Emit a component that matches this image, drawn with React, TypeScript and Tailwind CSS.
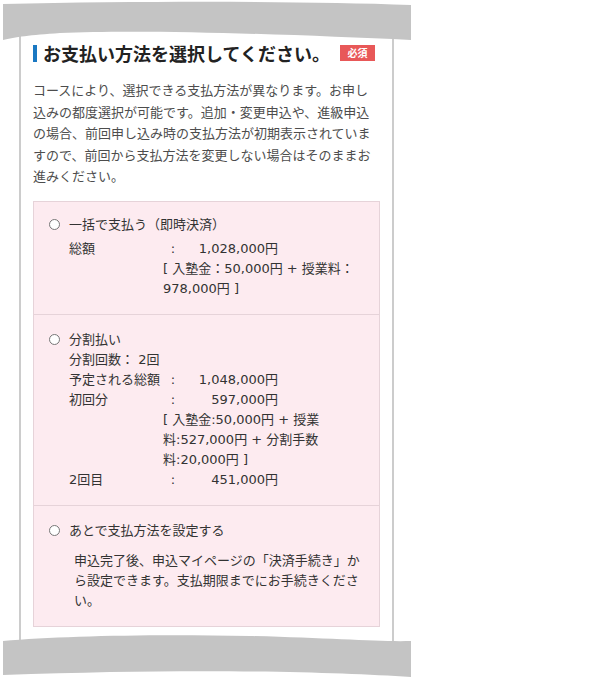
import React from "react";

const font = { fontFamily: '"Noto Sans CJK JP", "Noto Sans", sans-serif' };
// Meiryo-like wide latin digits for the amounts box
const boxFont = { fontFamily: '"DejaVu Sans", "Noto Sans CJK JP", sans-serif' };

type Row = { label: string; value?: string; note?: string };

function Radio() {
  return <span className="inline-block w-[11px] h-[11px] rounded-full border border-[#777] bg-white shrink-0" />;
}

function AmountRow({ label, value, note }: Row) {
  return (
    <div className="grid grid-cols-[94px_1fr]">
      <div>{label}</div>
      <div>
        {value && (
          <div className="flex">
            <span className="w-[20px] text-center">:</span>
            <span className="w-[95px] text-right">{value}</span>
          </div>
        )}
        {note && <div>{note}</div>}
      </div>
    </div>
  );
}

function Option({ title, children, first }: { title: string; children: React.ReactNode; first?: boolean }) {
  return (
    <div className={`pl-[15px] pr-[15px] pb-[15px] ${first ? "pt-[13px]" : "pt-[15px] border-t border-[#e6d3d9]"}`}>
      <div className="flex items-center gap-[9px]">
        <Radio />
        <span>{title}</span>
      </div>
      {children}
    </div>
  );
}

export default function App() {
  return (
    <div className="relative w-[590px] h-[678px] bg-white overflow-hidden" style={font}>
      {/* panel */}
      <div className="ml-[19px] mt-[20px] w-[375px] h-[630px] border-x-2 border-[#cccccc] px-3 pt-[21px] text-[#333]">
        <div className="flex items-center justify-between">
          <div className="flex items-center">
            <span className="w-[4px] h-[17px] bg-[#1a78c2]" />
            <h1 className="ml-[6px] text-[18px] leading-[24px] font-bold text-[#222]">お支払い方法を選択してください。</h1>
          </div>
          <span className="mr-[5px] bg-[#e85858] text-white text-[10px] font-bold leading-[16px] w-[35px] text-center">必須</span>
        </div>

        <p className="mt-[14px] text-[13px] leading-[21.5px] text-[#4d4d4d]">
          コースにより、選択できる支払方法が異なります。お申し込みの都度選択が可能です。追加・変更申込や、進級申込の場合、前回申し込み時の支払方法が初期表示されていますので、前回から支払方法を変更しない場合はそのままお進みください。
        </p>

        <div className="mt-[14px] bg-[#fdebf0] border border-[#e6d3d9] text-[13px] leading-[20px] text-[#333]" style={boxFont}>
          <Option title="一括で支払う（即時決済）" first>
            <div className="pl-[20px] mt-[4px]">
              <AmountRow label="総額" value="1,028,000円" note="[ 入塾金：50,000円 + 授業料：978,000円 ]" />
            </div>
          </Option>
          <Option title="分割払い">
            <div className="pl-[20px]">
              <div>分割回数： 2回</div>
              <AmountRow label="予定される総額" value="1,048,000円" />
              <AmountRow label="初回分" value="597,000円" note="[ 入塾金:50,000円 + 授業料:527,000円 + 分割手数料:20,000円 ]" />
              <AmountRow label="2回目" value="451,000円" />
            </div>
          </Option>
          <Option title="あとで支払方法を設定する">
            <p className="pl-[25px] mt-[10px]">
              申込完了後、申込マイページの「決済手続き」から設定できます。支払期限までにお手続きください。
            </p>
          </Option>
        </div>
      </div>

      {/* torn edges */}
      <svg className="absolute left-0 top-0" width="590" height="678" viewBox="0 0 590 678">
        <path d="M3 4 C150 1 300 1 411 5 L411 40 C300 35 150 29 60 33 C30 35 15 37 3 40 Z" fill="#c4c4c4" />
        <path d="M3 641 C60 636 150 634 250 636 C330 638 380 642 411 641 L411 677 C330 672 200 668 3 675 Z" fill="#c4c4c4" />
      </svg>
    </div>
  );
}
